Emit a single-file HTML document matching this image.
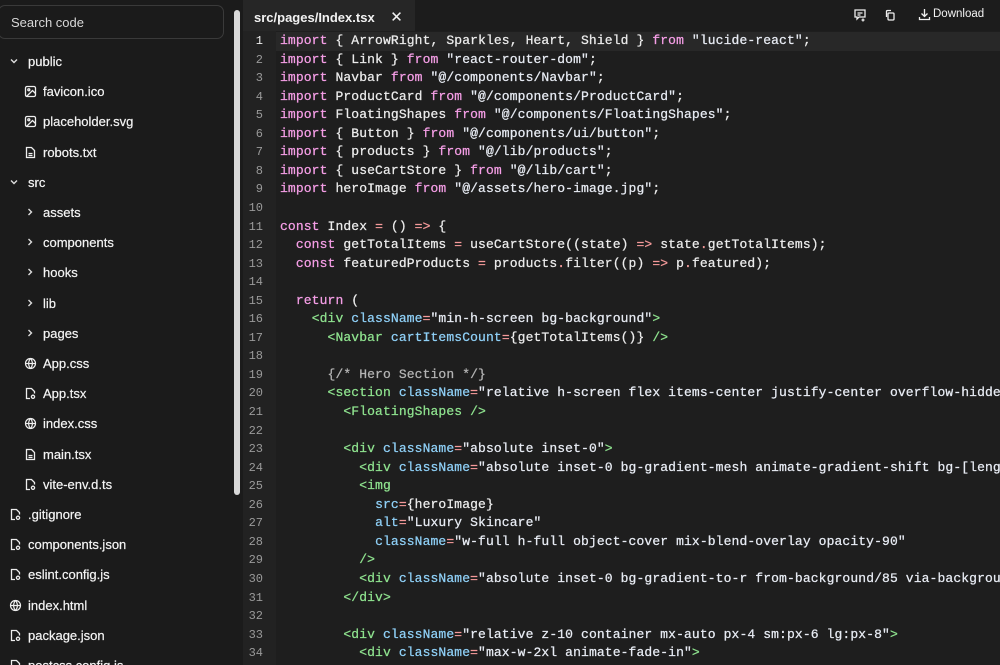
<!DOCTYPE html>
<html><head><meta charset="utf-8"><style>
*{margin:0;padding:0;box-sizing:border-box}
html,body{width:1000px;height:665px;overflow:hidden}
body{background:#1c1c1c;font-family:"Liberation Sans",sans-serif;color:#ececec;position:relative}
#side{position:absolute;left:0;top:0;width:232px;height:665px;background:#1b1b1b;overflow:hidden}
.search{position:absolute;left:-2px;top:5px;width:226px;height:34px;border:1px solid #3a3a3a;border-radius:7px;font-size:13px;color:#d8d8d8;padding:9px 0 0 12px}
.it{position:absolute;font-size:13px;height:20px;line-height:20px;white-space:nowrap;color:#f4f4f4;-webkit-text-stroke:0.2px #f4f4f4}
.it svg{position:absolute;top:3px}
#sb{position:absolute;left:232px;top:0;width:11px;height:665px;background:#1b1b1b}
#sb .th{position:absolute;left:2px;top:10px;width:6px;height:485px;border-radius:3px;background:#d8d8d8}
#top{position:absolute;left:243px;top:0;width:757px;height:31px;background:#1c1c1c}
.tab{position:absolute;left:0;top:0;width:172px;height:31px;background:#262626;font-size:13px;font-weight:bold;padding:8px 0 0 11px;color:#f2f2f2}
#ed{position:absolute;left:243px;top:31px;width:757px;height:634px;background:#1e1e1e;overflow:hidden}
#gut{position:absolute;left:0;top:0;width:33px;height:634px;background:#222}
.ln{position:absolute;left:0;width:757px;height:18.55px;font-family:"Liberation Mono",monospace;font-size:13px;line-height:18.55px;white-space:pre}
.ln .n{position:absolute;left:0;width:20px;text-align:right;color:#9a9a9a;font-size:12px}
.ln .c{position:absolute;left:37px;color:#ececec;letter-spacing:0.12px;-webkit-text-stroke:0.25px currentColor}
.k{color:#f59ee6}.s{color:#e8ecf4}.t{color:#8fe38f}.a{color:#8fd0f7}.o{color:#f59a9a}.m{color:#b4b4b4}
</style></head><body>
<div id="side">
<div class="search">Search code</div>
</div>
<div id="sb"><div class="th"></div></div>
<div id="top"><div class="tab">src/pages/Index.tsx <span style="font-weight:normal;margin-left:12px;font-size:15px">✕</span></div>
<svg style="position:absolute;left:610px;top:8px" width="14" height="14" viewBox="0 0 14 14" fill="none" stroke="#eee" stroke-width="1.3"><path d="M2 2h10v7H6l-2 2v-2H2z"/><path d="M4.5 5h5M4.5 7h3"/><path d="M10 10.5v3M8.5 12h3"/></svg>
<svg style="position:absolute;left:641px;top:9px" width="12" height="12" viewBox="0 0 12 12" fill="none" stroke="#eee" stroke-width="1.3"><rect x="4" y="4" width="6" height="7" rx="1"/><path d="M2.5 8V2.5a1 1 0 0 1 1-1H7"/></svg>
<svg style="position:absolute;left:675px;top:8px" width="13" height="13" viewBox="0 0 13 13" fill="none" stroke="#eee" stroke-width="1.3"><path d="M6.5 1v7M3.5 5.5l3 3 3-3M1.5 9v2.5h10V9"/></svg>
<span style="position:absolute;left:690px;top:8px;font-size:11.5px;color:#f2f2f2">Download</span>
</div>
<div id="ed"><div id="gut"></div><div style="position:absolute;left:33px;top:1px;width:724px;height:18.5px;background:#282828"></div><div id="code"></div></div>
<script>
var S=document.getElementById('side');
function chev(open){return open?'<svg width="12" height="12" viewBox="0 0 12 12" fill="none" stroke="#ddd" stroke-width="1.4" style="left:0"><path d="M3 4.5l3 3 3-3"/></svg>':'<svg width="12" height="12" viewBox="0 0 12 12" fill="none" stroke="#ddd" stroke-width="1.4" style="left:0"><path d="M4.5 3l3 3-3 3"/></svg>';}
var img='<svg width="13" height="13" viewBox="0 0 13 13" fill="none" stroke="#eee" stroke-width="1.3" style="left:0"><rect x="1.5" y="1.5" width="10" height="10" rx="1.5"/><circle cx="4.8" cy="4.8" r="1"/><path d="M11.5 8.5l-3-3-6 6"/></svg>';
var doc='<svg width="13" height="13" viewBox="0 0 13 13" fill="none" stroke="#eee" stroke-width="1.3" style="left:0"><path d="M2.5 1.5h5l3 3v7h-8z"/><path d="M4.5 7.5h4M4.5 9.5h4"/></svg>';
var glob='<svg width="13" height="13" viewBox="0 0 13 13" fill="none" stroke="#eee" stroke-width="1.2" style="left:0"><circle cx="6.5" cy="6.5" r="5"/><path d="M1.5 6.5h10M6.5 1.5c-2.5 3-2.5 7 0 10M6.5 1.5c2.5 3 2.5 7 0 10"/></svg>';
var cfg='<svg width="13" height="13" viewBox="0 0 13 13" fill="none" stroke="#eee" stroke-width="1.3" style="left:0"><path d="M6 11.5H2.5v-10h5l3 3v2"/><circle cx="9" cy="9.8" r="1.6"/></svg>';
var items=[
[8,'c1','public'],[24,'img','favicon.ico'],[24,'img','placeholder.svg'],[24,'doc','robots.txt'],
[8,'c1','src'],[24,'c0','assets'],[24,'c0','components'],[24,'c0','hooks'],[24,'c0','lib'],[24,'c0','pages'],
[24,'glob','App.css'],[24,'cfg','App.tsx'],[24,'glob','index.css'],[24,'doc','main.tsx'],[24,'cfg','vite-env.d.ts'],
[9,'cfg','.gitignore'],[9,'cfg','components.json'],[9,'cfg','eslint.config.js'],[9,'glob','index.html'],[9,'cfg','package.json'],[9,'cfg','postcss.config.js']];
var h='';
items.forEach(function(it,i){var y=52+i*30.2;var ic={c1:chev(1),c0:chev(0),img:img,doc:doc,glob:glob,cfg:cfg}[it[1]];
var tx=it[0]+(it[0]==8?20:19);
h+='<div class="it" style="left:'+it[0]+'px;top:'+y+'px">'+ic+'<span style="position:absolute;left:'+(tx-it[0])+'px">'+it[2]+'</span></div>';});
S.innerHTML+=h;
function e(s){return s.replace(/&/g,'&amp;').replace(/</g,'&lt;').replace(/>/g,'&gt;');}
var L=[
'[k]import[/] { ArrowRight, Sparkles, Heart, Shield } [k]from[/] [s]"lucide-react"[/];',
'[k]import[/] { Link } [k]from[/] [s]"react-router-dom"[/];',
'[k]import[/] Navbar [k]from[/] [s]"@/components/Navbar"[/];',
'[k]import[/] ProductCard [k]from[/] [s]"@/components/ProductCard"[/];',
'[k]import[/] FloatingShapes [k]from[/] [s]"@/components/FloatingShapes"[/];',
'[k]import[/] { Button } [k]from[/] [s]"@/components/ui/button"[/];',
'[k]import[/] { products } [k]from[/] [s]"@/lib/products"[/];',
'[k]import[/] { useCartStore } [k]from[/] [s]"@/lib/cart"[/];',
'[k]import[/] heroImage [k]from[/] [s]"@/assets/hero-image.jpg"[/];',
'',
'[k]const[/] Index [o]=[/] () [o]=>[/] {',
'  [k]const[/] getTotalItems [o]=[/] useCartStore((state) [o]=>[/] state[o].[/]getTotalItems);',
'  [k]const[/] featuredProducts [o]=[/] products[o].[/]filter((p) [o]=>[/] p[o].[/]featured);',
'',
'  [k]return[/] (',
'    [t]<div[/] [a]className[/][o]=[/][s]"min-h-screen bg-background"[/][t]>[/]',
'      [t]<Navbar[/] [a]cartItemsCount[/][o]=[/]{getTotalItems()} [t]/>[/]',
'',
'      [m]{/* Hero Section */}[/]',
'      [t]<section[/] [a]className[/][o]=[/][s]"relative h-screen flex items-center justify-center overflow-hidden"[/][t]>[/]',
'        [t]<FloatingShapes[/] [t]/>[/]',
'',
'        [t]<div[/] [a]className[/][o]=[/][s]"absolute inset-0"[/][t]>[/]',
'          [t]<div[/] [a]className[/][o]=[/][s]"absolute inset-0 bg-gradient-mesh animate-gradient-shift bg-[length:400%_400%]"[/]',
'          [t]<img[/]',
'            [a]src[/][o]=[/]{heroImage}',
'            [a]alt[/][o]=[/][s]"Luxury Skincare"[/]',
'            [a]className[/][o]=[/][s]"w-full h-full object-cover mix-blend-overlay opacity-90"[/]',
'          [t]/>[/]',
'          [t]<div[/] [a]className[/][o]=[/][s]"absolute inset-0 bg-gradient-to-r from-background/85 via-background"[/]',
'        [t]</div>[/]',
'',
'        [t]<div[/] [a]className[/][o]=[/][s]"relative z-10 container mx-auto px-4 sm:px-6 lg:px-8"[/][t]>[/]',
'          [t]<div[/] [a]className[/][o]=[/][s]"max-w-2xl animate-fade-in"[/][t]>[/]'];
var c='';
L.forEach(function(l,i){var t=e(l).replace(/\[(\w)\]/g,'<span class="$1">').replace(/\[\/\]/g,'</span>');
c+='<div class="ln" style="top:'+(1+i*18.55)+'px"><span class="n" style="color:'+(i==0?'#eee':'#9a9a9a')+'">'+(i+1)+'</span><span class="c">'+t+'</span></div>';});
document.getElementById('code').innerHTML=c;
</script>
</body></html>
